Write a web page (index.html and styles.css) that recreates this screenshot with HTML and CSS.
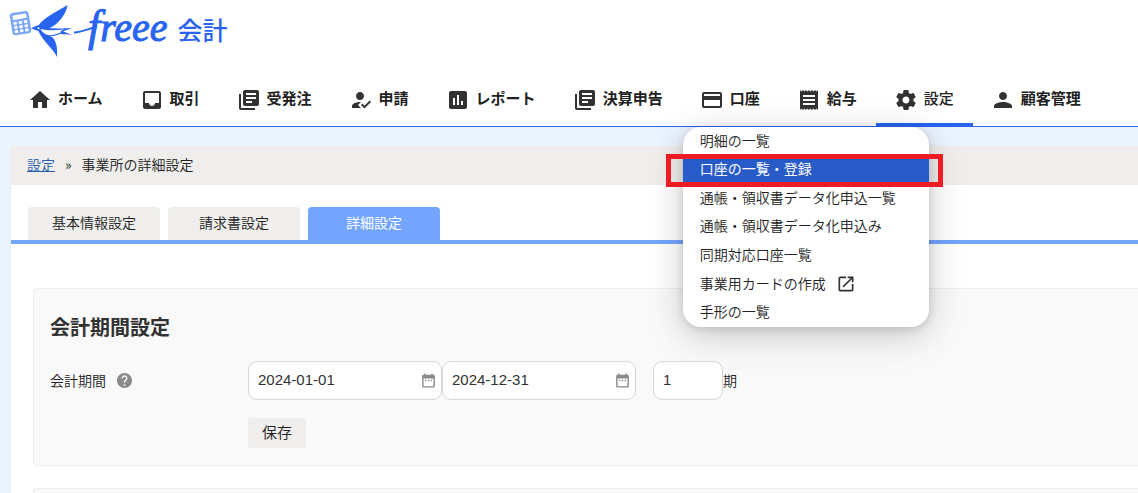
FILE: index.html
```html
<!DOCTYPE html>
<html lang="ja">
<head>
<meta charset="utf-8">
<title>事業所の詳細設定</title>
<link rel="stylesheet" href="styles.css">
</head>
<body>
<header class="header">
  <a class="logo" href="#">
    <svg class="logo-bird" viewBox="0 0 100 60" aria-hidden="true">
      <g transform="rotate(-9 20 23)">
        <rect x="11" y="12" width="19" height="22.500" rx="3" fill="#7ba8fa"/>
        <g fill="#fff"><rect x="13.500" y="14.500" width="14" height="4.500" rx="1"/>
        <rect x="13.500" y="21" width="3.400" height="3" rx="1"/><rect x="18.800" y="21" width="3.400" height="3" rx="1"/><rect x="24.100" y="21" width="3.400" height="3" rx="1"/>
        <rect x="13.500" y="25.200" width="3.400" height="3" rx="1"/><rect x="18.800" y="25.200" width="3.400" height="3" rx="1"/><rect x="24.100" y="25.200" width="3.400" height="3" rx="1"/>
        <rect x="13.500" y="29.400" width="3.400" height="3" rx="1"/><rect x="18.800" y="29.400" width="3.400" height="3" rx="1"/><rect x="24.100" y="29.400" width="3.400" height="3" rx="1"/></g>
      </g>
      <g fill="#2864f0">
        <path d="M38 26C44 17 58 11 67.500 5C66 15 58 24 50 28L41 29Z"/>
        <path d="M38 30L50 36C56 38 58 48 57 57C53 48 43 42 38 30Z"/>
        <path d="M31 28.300L36 26C38 24.500 42 25.500 44 27C52 29 60 28.500 72 28C68 30 65 30.500 63 31.200C66 32.800 69 33.500 72 34.700C67 34.700 63 34.500 60 33.800C54 37 46 37 42 33C39 31 35 30 31 28.300Z"/>
      </g>
      <path d="M40.500 29C48 30.800 56 30.400 65 29.300C61 30.500 60 31.500 61 32.300C57 34 53 35.600 49 35.200C45 34.600 42 32 40.500 29Z" fill="#fff"/>
      <circle cx="38.500" cy="28.300" r="1" fill="#fff"/>
      <path d="M74 32.500C80 32.500 87 29.500 97 26.500" fill="none" stroke="#2864f0" stroke-width="2"/>
    </svg>
    <span class="logo-name"><span class="logo-initial">f</span>reee</span><span class="logo-product">会計</span>
  </a>
  <nav class="nav">
    <a class="nav-link" href="#"><svg class="icon" viewBox="0 0 24 24"><path d="M10 20v-6h4v6h5v-8h3L12 3 2 12h3v8z"/></svg>ホーム</a>
    <a class="nav-link" href="#"><svg class="icon" viewBox="0 0 24 24"><path d="M19 3H4.990c-1.110 0-1.980.89-1.980 2L3 19c0 1.100.88 2 1.990 2H19c1.100 0 2-.9 2-2V5c0-1.110-.9-2-2-2zm0 12h-4c0 1.660-1.350 3-3 3s-3-1.340-3-3H4.990V5H19v10z"/></svg>取引</a>
    <a class="nav-link" href="#"><svg class="icon" viewBox="0 0 24 24"><path d="M4 6H2v14c0 1.100.9 2 2 2h14v-2H4V6zm16-4H8c-1.100 0-2 .9-2 2v12c0 1.100.9 2 2 2h12c1.100 0 2-.9 2-2V4c0-1.100-.9-2-2-2zm-1 9H9V9h10v2zm-4 4H9v-2h6v2zm4-8H9V5h10v2z"/></svg>受発注</a>
    <a class="nav-link" href="#"><svg class="icon" viewBox="0 0 24 24"><path d="M9 17l3-2.940c-.39-.04-.68-.06-1-.06-2.670 0-8 1.340-8 4v2h9l-3-3zm2-5c2.210 0 4-1.790 4-4s-1.790-4-4-4-4 1.790-4 4 1.790 4 4 4m4.470 8.500L12 17l1.400-1.410 2.070 2.080 5.130-5.170 1.400 1.410z"/></svg>申請</a>
    <a class="nav-link" href="#"><svg class="icon" viewBox="0 0 24 24"><path d="M19 3H5c-1.100 0-2 .9-2 2v14c0 1.100.9 2 2 2h14c1.100 0 2-.9 2-2V5c0-1.100-.9-2-2-2zM9 17H7v-7h2v7zm4 0h-2V7h2v10zm4 0h-2v-4h2v4z"/></svg>レポート</a>
    <a class="nav-link" href="#"><svg class="icon" viewBox="0 0 24 24"><path d="M4 6H2v14c0 1.100.9 2 2 2h14v-2H4V6zm16-4H8c-1.100 0-2 .9-2 2v12c0 1.100.9 2 2 2h12c1.100 0 2-.9 2-2V4c0-1.100-.9-2-2-2zm-1 9H9V9h10v2zm-4 4H9v-2h6v2zm4-8H9V5h10v2z"/></svg>決算申告</a>
    <div class="nav-group">
      <a class="nav-link" href="#"><svg class="icon" viewBox="0 0 24 24"><path d="M20 4H4c-1.110 0-1.990.89-1.990 2L2 18c0 1.110.89 2 2 2h16c1.110 0 2-.89 2-2V6c0-1.110-.89-2-2-2zm0 14H4v-6h16v6zm0-10H4V6h16v2z"/></svg>口座</a>
      <div class="menu">
        <a class="menu-link" href="#">明細の一覧</a>
        <a class="menu-link menu-link-active" href="#">口座の一覧・登録</a>
        <a class="menu-link" href="#">通帳・領収書データ化申込一覧</a>
        <a class="menu-link" href="#">通帳・領収書データ化申込み</a>
        <a class="menu-link" href="#">同期対応口座一覧</a>
        <a class="menu-link" href="#">事業用カードの作成<svg class="icon-external" viewBox="0 0 24 24"><path d="M19 19H5V5h7V3H5c-1.110 0-2 .9-2 2v14c0 1.100.89 2 2 2h14c1.100 0 2-.9 2-2v-7h-2v7zM14 3v2h3.590l-9.830 9.830 1.410 1.410L19 6.410V10h2V3h-7z"/></svg></a>
        <a class="menu-link" href="#">手形の一覧</a>
      </div>
    </div>
    <a class="nav-link" href="#"><svg class="icon" viewBox="0 0 24 24"><path d="M18 17H6v-2h12v2zm0-4H6v-2h12v2zm0-4H6V7h12v2zM3 22l1.500-1.500L6 22l1.500-1.500L9 22l1.500-1.500L12 22l1.500-1.500L15 22l1.500-1.500L18 22l1.500-1.500L21 22V2l-1.500 1.500L18 2l-1.500 1.500L15 2l-1.500 1.500L12 2l-1.500 1.500L9 2 7.500 3.500 6 2 4.500 3.500 3 2v20z"/></svg>給与</a>
    <a class="nav-link nav-link-active" href="#"><svg class="icon" viewBox="0 0 24 24"><path d="M19.430 12.980c.04-.32.07-.64.07-.98s-.03-.66-.07-.98l2.110-1.650c.19-.15.24-.42.12-.64l-2-3.460c-.12-.22-.39-.3-.61-.22l-2.490 1c-.52-.4-1.080-.73-1.690-.98l-.38-2.650C14.460 2.180 14.250 2 14 2h-4c-.25 0-.46.18-.49.42l-.38 2.650c-.61.25-1.170.59-1.690.98l-2.490-1c-.23-.09-.49 0-.61.22l-2 3.460c-.13.22-.07.49.12.64l2.110 1.650c-.04.32-.07.65-.07.98s.03.66.07.98l-2.110 1.650c-.19.15-.24.42-.12.64l2 3.460c.12.22.39.3.61.22l2.490-1c.52.4 1.080.73 1.690.98l.38 2.650c.03.24.24.42.49.42h4c.25 0 .46-.18.49-.42l.38-2.650c.61-.25 1.170-.59 1.690-.98l2.490 1c.23.09.49 0 .61-.22l2-3.460c.12-.22.07-.49-.12-.64l-2.110-1.650zM12 15.500c-1.930 0-3.500-1.570-3.500-3.500s1.570-3.500 3.500-3.500 3.500 1.570 3.500 3.500-1.570 3.500-3.500 3.500z"/></svg>設定</a>
    <a class="nav-link" href="#"><svg class="icon" viewBox="0 0 24 24"><path d="M12 12c2.210 0 4-1.790 4-4s-1.790-4-4-4-4 1.790-4 4 1.790 4 4 4zm0 2c-2.670 0-9 1.340-9 4v2h18v-2c0-2.660-6.330-4-9-4z"/></svg>顧客管理</a>
  </nav>
</header>
<main class="page">
  <div class="breadcrumb"><a class="breadcrumb-link" href="#">設定</a><span>»</span><span>事業所の詳細設定</span></div>
  <div class="tabs">
    <button class="tab" type="button">基本情報設定</button>
    <button class="tab" type="button">請求書設定</button>
    <button class="tab tab-active" type="button">詳細設定</button>
  </div>
  <form class="card">
    <h2 class="card-title">会計期間設定</h2>
    <div class="row">
      <label class="row-label" for="start">会計期間<svg class="icon-help" viewBox="2 2 20 20"><path d="M12 2C6.480 2 2 6.480 2 12s4.480 10 10 10 10-4.480 10-10S17.520 2 12 2zm1 17h-2v-2h2v2zm2.070-7.750l-.9.920C13.450 12.900 13 13.500 13 15h-2v-.5c0-1.100.45-2.100 1.170-2.830l1.240-1.260c.37-.36.59-.86.59-1.410 0-1.100-.9-2-2-2s-2 .9-2 2H8c0-2.210 1.790-4 4-4s4 1.790 4 4c0 .88-.36 1.680-.93 2.250z"/></svg></label>
      <div class="field field-date"><input class="input" id="start" value="2024-01-01"><svg class="icon-date" viewBox="0 0 24 24"><path d="M9 11H7v2h2v-2zm4 0h-2v2h2v-2zm4 0h-2v2h2v-2zm2-7h-1V2h-2v2H8V2H6v2H5c-1.110 0-1.990.9-1.990 2L3 20c0 1.100.89 2 2 2h14c1.100 0 2-.9 2-2V6c0-1.100-.9-2-2-2zm0 16H5V9h14v11z"/></svg></div>
      <div class="field field-date"><input class="input" aria-label="終了日" value="2024-12-31"><svg class="icon-date" viewBox="0 0 24 24"><path d="M9 11H7v2h2v-2zm4 0h-2v2h2v-2zm4 0h-2v2h2v-2zm2-7h-1V2h-2v2H8V2H6v2H5c-1.110 0-1.990.9-1.990 2L3 20c0 1.100.89 2 2 2h14c1.100 0 2-.9 2-2V6c0-1.100-.9-2-2-2zm0 16H5V9h14v11z"/></svg></div>
      <div class="field field-term"><input class="input" id="term" value="1"></div><label class="unit" for="term">期</label>
    </div>
    <button class="save" type="button">保存</button>
  </form>
  <section class="card card-next"></section>
</main>
</body>
</html>
```

FILE: styles.css
```css
* { box-sizing: border-box; }
body {
  margin: 0;
  min-height: 100vh;
  display: flex;
  flex-direction: column;
  background: #ebf3ff;
  color: #222;
  font: 350 14px/20px "Noto Sans CJK JP", sans-serif;
}
a { color: inherit; text-decoration: none; }
button { font: inherit; color: inherit; border: 0; }
.header { background: #fff; border-bottom: 1px solid #2864f0; }
.logo { display: flex; height: 74px; color: #2864f0; }
.logo-bird { width: 100px; height: 60px; margin-right: -12px; }
.logo-name {
  font: italic 40px/54px "Liberation Serif", serif;
  -webkit-text-stroke: 1px #2864f0;
}
.logo-initial { font-size: 44px; }
.logo-product { margin-left: 10px; font-size: 25px; line-height: 58px; font-weight: 500; }
.nav { display: flex; height: 52px; padding-left: 10px; }
.nav-group { position: relative; }
.nav-link {
  display: flex;
  gap: 6px;
  height: 52px;
  padding: 0 19px 0 18px;
  color: #212121;
  font-size: 15px;
  font-weight: 700;
  line-height: 48px;
  white-space: nowrap;
}
.nav-link-active { height: 53px; font-weight: 500; border-bottom: 4px solid #2864f0; }
.icon { width: 24px; height: 24px; margin-top: 14px; fill: #323232; }
.menu {
  position: absolute;
  top: 53px;
  left: 1px;
  z-index: 2;
  display: grid;
  grid-auto-rows: 1fr;
  width: 246px;
  height: 200px;
  background: #fff;
  border-radius: 18px;
  box-shadow: 0 8px 36px rgba(0, 0, 0, .2), 0 2px 8px rgba(0, 0, 0, .14);
}
.menu-link { display: flex; align-items: center; gap: 10px; padding: 0 0 3px 17px; }
.menu-link-active { position: relative; background: #285ac8; color: #fff; font-weight: 400; }
.menu-link-active::after {
  content: "";
  position: absolute;
  inset: -2px -14px -3px -17px;
  border: 5px solid #ed1c24;
}
.icon-external { width: 20px; height: 20px; margin-top: 2px; fill: #323232; }
.page {
  flex: 1;
  display: flex;
  flex-direction: column;
  margin: 19px 0 0 10px;
  background: #fff;
  border-left: 1px solid #efeeec;
}
.breadcrumb { display: flex; gap: 10px; padding: 8px 16px 11px; background: #efeeec; }
.breadcrumb-link { color: #2c5caa; text-decoration: underline; }
.tabs { display: flex; gap: 8px; padding: 22px 17px 0; border-bottom: 4px solid #73a5ff; }
.tab { width: 132px; height: 33px; padding: 0 0 4px; background: #efeeec; border-radius: 4px 4px 0 0; }
.tab-active { background: #73a5ff; color: #fff; font-weight: 400; }
.card {
  margin: 44px 0 0 22px;
  padding: 24px 16px 17px;
  background: #f9f9f9;
  border: 1px solid #eee;
  border-right: 0;
  border-radius: 4px 0 0 4px;
}
.card-next { flex: 1; margin-top: 22px; padding: 0; border-bottom: 0; border-radius: 4px 0 0 0; }
.card-title { margin: 0 0 20px; font-size: 20px; line-height: 28px; font-weight: 700; color: #323232; }
.row { display: flex; align-items: center; margin-bottom: 18px; }
.row-label { display: flex; align-items: center; gap: 11px; width: 198px; padding-bottom: 2px; }
.unit { padding-bottom: 2px; }
.icon-help { width: 15px; height: 15px; margin-top: 2px; fill: #8c8989; }
.field {
  display: flex;
  align-items: center;
  height: 39px;
  padding: 0 4px 0 9px;
  background: #fff;
  border: 1px solid #d7d7d7;
  border-radius: 9px;
}
.field-date { width: 194px; }
.field-term { width: 70px; margin-left: 17px; }
.input {
  flex: 1;
  width: 100%;
  min-width: 0;
  padding: 0 0 2px;
  border: 0;
  outline: 0;
  background: none;
  color: #323232;
  font: 15px/20px "Liberation Sans", sans-serif;
}
.icon-date { width: 17px; height: 17px; fill: #8c8989; }
.save {
  display: block;
  height: 30px;
  margin-left: 198px;
  padding: 0 14px 2px;
  background: #efeeec;
  border-radius: 3px;
  font-size: 15px;
}
```
